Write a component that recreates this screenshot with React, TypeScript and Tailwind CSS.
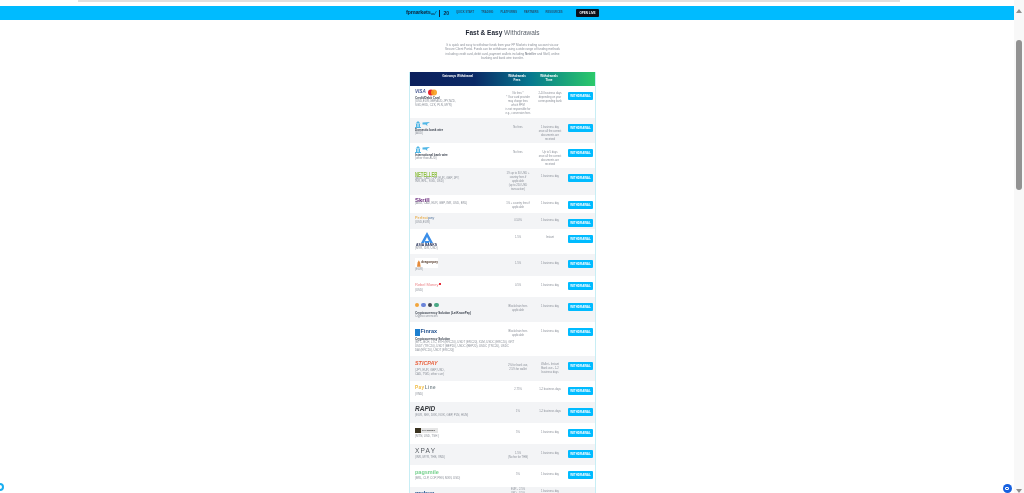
const rows = [
  { h: 32, logo: 'visa', top: 'pt-[6px]', timeTop: 'pt-[6px]', name: 'Credit/Debit Card', cur: ['(USD,EUR,GBP,AUD,JPY,NZD,', 'SGD,HKD, CZK, PLN, MYR)'], fee: ['No fees *', '* Your card provider', 'may charge fees', 'which FPM', 'is not responsible for', 'e.g., conversion fees'], time: ['2-10 business days', 'depending on your', 'corresponding bank'] },
  { h: 25, logo: 'bank', top: 'pt-[7.5px]', timeTop: 'pt-[7.5px]', name: 'Domestic bank wire', cur: ['(AUD)'], fee: ['No fees'], time: ['1 business day', 'once all the correct', 'documents are', 'received'] },
  { h: 25, logo: 'bank', top: 'pt-[7.5px]', timeTop: 'pt-[7.5px]', name: 'International bank wire', cur: ['(other than AUD)'], fee: ['No fees'], time: ['Up to 5 days', 'once all the correct', 'documents are', 'received'] },
  { h: 27, logo: 'neteller', top: 'pt-[4px]', timeTop: 'pt-[7px]', cur: ['(AUD, CAD, CHF, EUR, GBP, JPY,', 'INR, BRL, SGD, USD)'], fee: ['1% up to 30 USD +', 'country fees if', 'applicable', '(up to 250 USD', 'transaction)'], time: ['1 business day'] },
  { h: 18, logo: 'skrill', top: 'pt-[7px]', timeTop: 'pt-[7px]', cur: ['(AUD, CAD, EUR, GBP, INR, USD, BRL)'], fee: ['1% + country fees if', 'applicable'], time: ['1 business day'] },
  { h: 16, logo: 'perfect', top: 'pt-[6px]', timeTop: 'pt-[6px]', cur: ['(USD,EUR)'], fee: ['0.50%'], time: ['1 business day'] },
  { h: 25, logo: 'asia', top: 'pt-[7px]', timeTop: 'pt-[7px]', cur: ['(MYR, IDR, USD)'], fee: ['1.5%'], time: ['Instant'] },
  { h: 22, logo: 'dragon', top: 'pt-[8px]', timeTop: 'pt-[8px]', cur: ['(EUR)'], fee: ['1.5%'], time: ['1 business day'] },
  { h: 21, logo: 'rebel', top: 'pt-[7.5px]', timeTop: 'pt-[7.5px]', cur: ['(USD)'], fee: ['0.5%'], time: ['1 business day'] },
  { h: 25, logo: 'crypto', top: 'pt-[7.5px]', timeTop: 'pt-[7.5px]', name: 'Cryptocurrency Solution (LetKnowPay)', cur: ['Crypto currencies'], fee: ['Blockchain fees', 'applicable'], time: ['1 business day'] },
  { h: 34, logo: 'finrax', top: 'pt-[8px]', timeTop: 'pt-[8px]', name: 'Cryptocurrency Solution', cur: ['(BTC, BCH, LTC, ETH (ERC20), USDT (ERC20), XLM, USDC (ERC20), GRT', 'USDT (TRC20), USDT (BEP20), USDC (BEP20), USDC (TRC20), USDC', 'DAI (ERC20), USDT (ERC20))'], fee: ['Blockchain fees', 'applicable'], time: ['1 business day'] },
  { h: 25, logo: 'sticpay', top: 'pt-[7.5px]', timeTop: 'pt-[7px]', cur: ['(JPY, EUR, GBP, USD,', 'CAD, TWD, other curr)'], fee: ['2% for bank use,', '2.5% for wallet'], time: ['Wallet - Instant', 'Bank use - 1-2', 'business days'] },
  { h: 21, logo: 'line', top: 'pt-[7px]', timeTop: 'pt-[7px]', cur: ['(VND)'], fee: ['2.75%'], time: ['1-2 business days'] },
  { h: 21, logo: 'rapid', top: 'pt-[7.5px]', timeTop: 'pt-[7.5px]', cur: ['(EUR, SEK, DKK, NOK, GBP, PLN, HUN)'], fee: ['1%'], time: ['1-2 business days'] },
  { h: 21, logo: 'paytrust', top: 'pt-[8px]', timeTop: 'pt-[8px]', cur: ['(MTN, USD, TSH )'], fee: ['5%'], time: ['1 business day'] },
  { h: 21, logo: 'xpay', top: 'pt-[7.5px]', timeTop: 'pt-[7.5px]', cur: ['(INR, MYR, THB, VND)'], fee: ['1.5%', '(No fee for THB)'], time: ['1 business day'] },
  { h: 22, logo: 'pagsmile', top: 'pt-[8px]', timeTop: 'pt-[8px]', cur: ['(BRL, CLP, COP, PEN, MXN, USD)'], fee: ['5%'], time: ['1 business day'] },
  { h: 24, logo: 'mybux', top: 'pt-[1px]', timeTop: 'pt-[3px]', cur: ['(EUR, USD)'], fee: ['EUR - 2.5%', 'USD - 3.5%'], time: ['1 business day'] },
]

const Logo = ({ kind }: { kind: string }) => {
  if (kind === 'visa') return (
    <div className="flex items-center gap-[2px] h-[7px]">
      <span className="text-[4.6px] font-bold italic text-[#4a5a94] leading-none">VISA</span>
      <svg width="9" height="7" viewBox="0 0 18 14"><circle cx="6" cy="7" r="6" fill="#e8232e" /><circle cx="12" cy="7" r="6" fill="#f69e1e" opacity="0.9" /></svg>
    </div>
  )
  if (kind === 'bank') return (
    <svg className="block" width="15" height="7" viewBox="0 0 30 14" fill="#4fb6e6">
      <rect x="0" y="12" width="12" height="2" />
      <rect x="2" y="6" width="2" height="6" />
      <rect x="5" y="6" width="2" height="6" />
      <rect x="8" y="6" width="2" height="6" />
      <path d="M6 0l5 5H1zM15 3l15-1-6 4 1 4-4-3-6 0z" />
    </svg>
  )
  if (kind === 'neteller') return (
    <div className="h-[5.5px] pt-[0.5px]">
      <span className="block origin-left scale-x-[0.65] text-[6.5px] leading-[5px] font-bold whitespace-nowrap text-[#8dbf3f]">NETELLER</span>
    </div>
  )
  if (kind === 'skrill') return <span className="block text-[6px] leading-[5px] h-[4px] font-bold text-[#6b2a7e]">Skrill</span>
  if (kind === 'perfect') return <span className="block text-[3.8px] leading-[5px] h-[5px] font-bold text-[#e9b45c]">Perfect<span className="text-[#7f97b5]">pay</span></span>
  if (kind === 'asia') return (
    <div className="flex flex-col items-center w-[23px] h-[15px]">
      <svg className="block" width="12" height="11" viewBox="0 0 12 11"><path d="M6 0l6 11H9L6 5 3 11H0z" fill="#3b8ee8" /><path d="M4 9h4v2H4z" fill="#3b8ee8" /></svg>
      <span className="text-[3.4px] leading-[4px] font-bold whitespace-nowrap text-[#1f2a52]">ASIA BANKS</span>
    </div>
  )
  if (kind === 'dragon') return (
    <div className="flex items-center gap-[0.5px] pl-[2px] w-[23px] h-[10px] mt-[1px] bg-white">
      <svg width="4" height="9" viewBox="0 0 6 11"><path d="M3 0l2 4 1 7H0l1-7z" fill="#e58a3a" /></svg>
      <span className="text-[3.3px] leading-none text-[#5a4030] font-semibold">dragonpay</span>
    </div>
  )
  if (kind === 'rebel') return (
    <div className="flex items-center h-[10px]">
      <span className="text-[4px] leading-[5px] whitespace-nowrap text-[#ec8589]">Rebel Money</span>
      <span className="w-[2px] h-[2px] ml-[0.5px] mb-[1px] bg-[#e62e3a]" />
    </div>
  )
  if (kind === 'crypto') return (
    <div className="flex gap-[2px] h-[11px] pt-[3px]">
      {['#f2a53c', '#6a83d8', '#44474f', '#4aa885'].map(c => (
        <span key={c} className="w-[4.4px] h-[4.4px] rounded-full" style={{ backgroundColor: c }} />
      ))}
    </div>
  )
  if (kind === 'finrax') return (
    <div className="flex items-center gap-[0.5px] h-[12px] pt-[2px]">
      <span className="w-[5px] h-[7px] bg-[#1c7fd0]" />
      <span className="text-[5.5px] leading-none font-bold text-[#1e4e8c]">Finrax</span>
    </div>
  )
  if (kind === 'sticpay') return <div className="flex items-center h-[10px]"><span className="text-[5.4px] leading-none font-bold italic text-[#e8603c]">STICPAY</span></div>
  if (kind === 'line') return <div className="flex items-center h-[9px]"><span className="text-[4.6px] leading-none font-bold tracking-[0.5px] text-[#7d8a90]"><span className="text-[#f0b93c]">Pay</span>Line</span></div>
  if (kind === 'rapid') return <div className="flex items-center h-[9px]"><span className="text-[6.5px] leading-none font-bold italic text-[#33363a]">RAPID</span></div>
  if (kind === 'paytrust') return (
    <div className="flex items-center h-[9px]">
      <div className="flex items-center w-[23px] h-[4.5px] bg-[#e6e6e6]">
        <span className="w-[6px] h-full bg-[#3a3320]" />
        <span className="text-[2.5px] ml-[1px] font-bold text-[#333333]">PAYTRUST</span>
      </div>
    </div>
  )
  if (kind === 'xpay') return <div className="flex items-center h-[9px]"><span className="text-[6.5px] leading-none tracking-[1.2px] text-[#555a60]">XPAY</span></div>
  if (kind === 'pagsmile') return <div className="flex items-center h-[9px]"><span className="text-[5.5px] leading-none font-semibold text-[#74d08c]">pagsmile</span></div>
  return <div className="flex items-center h-[5px]"><span className="text-[6px] leading-none font-bold text-[#1e4e8c]">mybux</span></div>
}

const Row = ({ row, odd }: { row: (typeof rows)[number]; odd: boolean }) => (
  <div className={`flex shrink-0 items-start ${odd ? 'bg-white' : 'bg-[#f3f4f6]'}`} style={{ height: row.h }}>
    <div className="w-[92px] pl-[5px] pt-[3px] shrink-0">
      <Logo kind={row.logo} />
      {row.name && <p className="text-[3px] leading-[4px] font-bold text-[#3d4450] whitespace-nowrap">{row.name}</p>}
      {row.cur.map(l => <p key={l} className="text-[2.9px] leading-[3.8px] text-[#8a8f98] whitespace-nowrap">{l}</p>)}
    </div>
    <div className={`w-[32px] shrink-0 text-center ${row.top}`}>
      {row.fee.map(l => <p key={l} className="text-[2.7px] leading-[4px] text-[#8a8f98] whitespace-nowrap">{l}</p>)}
    </div>
    <div className={`w-[32px] shrink-0 text-center ${row.timeTop}`}>
      {row.time.map(l => <p key={l} className="text-[2.7px] leading-[4px] text-[#8a8f98] whitespace-nowrap">{l}</p>)}
    </div>
    <div className="pl-[2px] pt-[6px] shrink-0">
      <button className="block w-[25px] h-[8px] rounded-[1px] bg-[#00bbff] text-white text-[3px] font-bold leading-none">WITHDRAWAL</button>
    </div>
  </div>
)

export default function App() {
  return (
    <div className="flex h-[493px] w-[1024px] overflow-hidden bg-white blur-[0.4px] font-['Liberation_Sans',sans-serif]">
      <div className="relative flex-1 min-w-0">
        <div className="ml-[78px] w-[822px] h-[1.5px] bg-[#e0e0e0]" />
        <div className="mt-[4px] h-[0.5px] bg-[#e4e4e4]" />
        <div className="h-[14px] bg-[#00bbff] flex items-center justify-center pr-[9px]">
          <div className="flex items-center w-[193px]">
            <div className="flex items-center w-[50px] shrink-0">
              <span className="text-[5.6px] font-bold tracking-[-0.25px] text-[#10243a] leading-none">fpmarkets</span>
              <svg className="ml-[0.5px]" width="6" height="5" viewBox="0 0 6 5"><path d="M0 2l1 2 1-2 1 2 2.5-4" stroke="#10243a" strokeWidth="0.5" fill="none" /></svg>
              <span className="ml-[2px] w-[0.5px] h-[7px] bg-[#10243a]" />
              <span className="ml-[4px] text-[5px] font-bold text-[#10243a] leading-none">20</span>
            </div>
            <nav className="flex gap-[7px] text-[2.7px] text-[#24506e] font-semibold leading-none whitespace-nowrap">
              <span>QUICK START</span>
              <span>TRADING</span>
              <span>PLATFORMS</span>
              <span>PARTNERS</span>
              <span>RESOURCES</span>
            </nav>
            <span className="ml-auto flex items-center justify-center w-[23px] h-[8.5px] rounded-[1px] bg-[#0b0f1a] text-white text-[3px] font-bold leading-none whitespace-nowrap">OPEN LIVE</span>
          </div>
        </div>
        <div className="text-center pt-[8px] pr-[9px]">
          <h1 className="text-[6.5px] leading-[10px] text-[#5a616b]"><b className="text-[#1c2230]">Fast &amp; Easy</b> Withdrawals</h1>
          <div className="mt-[4.7px] text-[3.05px] leading-[4.6px] text-[#8a8f98]">
            <p>It is quick and easy to withdraw funds from your FP Markets trading account via our</p>
            <p>Secure Client Portal. Funds can be withdrawn using a wide range of funding methods</p>
            <p>including credit card, debit card, payment wallets including <b>Neteller</b> and Skrill, online</p>
            <p>banking and bank wire transfer.</p>
          </div>
        </div>
        <div className="ml-[409px] mt-[11px] w-[187px] flex flex-col border-x-[1px] border-x-[#c8eef5]">
          <div className="flex shrink-0 h-[14px] bg-[linear-gradient(90deg,#0c1f5c_0%,#0b2a66_35%,#06788f_65%,#2bc96a_100%)] text-white text-[3px] font-bold leading-[3.8px] pt-[3px]">
            <span className="w-[92px] pl-[3.4px] text-center">Gateways Withdrawal</span>
            <span className="w-[30px] text-center">Withdrawals<br />Fees</span>
            <span className="w-[34px] text-center">Withdrawals<br />Time</span>
          </div>
          {rows.map((row, i) => <Row key={i} row={row} odd={i % 2 === 0} />)}
        </div>
        <div className="absolute left-[-4px] bottom-[2px] w-[8px] h-[8px] rounded-full border-[2px] border-[#19aef0] bg-white" />
        <div className="absolute right-[2.5px] bottom-0 flex items-center justify-center w-[9px] h-[9px] rounded-full bg-[#1560e0]">
          <span className="w-[4px] h-[3px] rounded-[1px] border-[1px] border-white" />
        </div>
      </div>
      <div className="w-[10px] shrink-0 bg-[#f8f8f8] flex flex-col items-center pt-[9px]">
        <span className="w-0 h-0 border-x-[3px] border-x-transparent border-b-[4px] border-b-[#8f8f8f]" />
        <span className="mt-[27px] w-[6px] h-[150px] rounded-full bg-[#929292]" />
        <span className="mt-auto w-0 h-0 border-x-[3px] border-x-transparent border-t-[4px] border-t-[#8f8f8f]" />
      </div>
    </div>
  )
}
